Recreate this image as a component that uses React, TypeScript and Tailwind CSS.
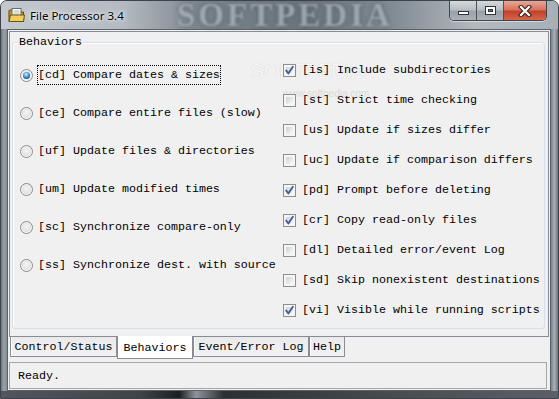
import React from "react";

const MONO = "font-['Liberation_Mono','Courier_New',monospace] text-[11.67px] leading-[14px] text-black";

function Radio({ checked }: { checked?: boolean }) {
  return (
    <span className="w-[13px] h-[13px] shrink-0 rounded-full border border-[#8b8b8b] bg-[radial-gradient(circle_at_50%_45%,#d9d9d9_0%,#e6e6e6_40%,#fbfbfb_75%,#d4d4d4_100%)] flex items-center justify-center">
      {checked ? (
        <span className="w-[7px] h-[7px] rounded-full bg-[radial-gradient(circle_at_45%_35%,#d6f2ff_0%,#5aaee4_35%,#1b5d9c_70%,#0d2f57_100%)]" />
      ) : (
        <span className="w-[9px] h-[9px] rounded-full bg-[radial-gradient(circle_at_50%_40%,#f4f4f4_0%,#dadada_100%)]" />
      )}
    </span>
  );
}

function Check({ checked }: { checked?: boolean }) {
  return (
    <span className="relative w-[13px] h-[13px] shrink-0 border border-[#8e8f8f] bg-[#f4f4f4] p-px">
      <span className="block w-full h-full border border-[#f6f6f6] bg-[linear-gradient(135deg,#d0d0d0_0%,#e6e6e6_50%,#f8f8f8_100%)]" />
      {checked && (
        <svg className="absolute left-0 top-0" width="11" height="11" viewBox="0 0 11 11">
          <path d="M2.2 5.6 L4.4 8.4 L8.9 1.8" fill="none" stroke="#4a5e9a" strokeWidth="1.9" strokeLinecap="round" strokeLinejoin="round" />
        </svg>
      )}
    </span>
  );
}

function FolderIcon() {
  return (
    <svg width="17" height="16" viewBox="0 0 17 16">
      <path d="M1 3.5 L1 14.5 L15.5 14.5 L15.5 5 L7.5 5 L6 3 L1.5 3 Z" fill="#c9962a" stroke="#5e4512" strokeWidth="1" />
      <rect x="4" y="1.5" width="9" height="9" fill="#fdfdfd" stroke="#6b6b6b" strokeWidth="1" />
      <path d="M5.5 4 H11.5 M5.5 6 H11.5 M5.5 8 H10" stroke="#9aa" strokeWidth="0.8" />
      <path d="M1 14.5 L2.5 8 L16.5 8 L15.5 14.5 Z" fill="#f2cf5b" stroke="#6b5215" strokeWidth="1" />
    </svg>
  );
}

function CaptionButtons() {
  return (
    <div className="flex h-[20px] border border-t-0 border-[#3e454b] rounded-b-[5px] overflow-hidden shadow-[0_1px_0_rgba(255,255,255,0.5)]">
      <div className="w-[27px] h-full flex items-center justify-center bg-[linear-gradient(180deg,#d4d9dd_0%,#b8bfc5_45%,#9aa2a9_55%,#aab1b7_100%)] border-r border-[#4b5157]">
        <span className="block w-[11px] h-[4px] mt-[5px] bg-white border border-[#2f3438]" />
      </div>
      <div className="w-[27px] h-full flex items-center justify-center bg-[linear-gradient(180deg,#d4d9dd_0%,#b8bfc5_45%,#9aa2a9_55%,#aab1b7_100%)] border-r border-[#4b5157]">
        <span className="block w-[11px] h-[9px] border border-[#2f3438] bg-white p-[2px]">
          <span className="block w-full h-full bg-[#6d757c] border border-[#2f3438]" />
        </span>
      </div>
      <div className="w-[42px] h-full flex items-center justify-center bg-[linear-gradient(180deg,#e8a797_0%,#d9735e_45%,#c2412a_55%,#d5684a_100%)]">
        <svg width="14" height="12" viewBox="0 0 14 12">
          <path d="M3 2 L11 10 M11 2 L3 10" stroke="#3a2420" strokeWidth="4.4" strokeLinecap="square" />
          <path d="M3 2 L11 10 M11 2 L3 10" stroke="#ffffff" strokeWidth="2.2" strokeLinecap="square" />
        </svg>
      </div>
    </div>
  );
}

export default function App() {
  const radios: [string, boolean][] = [
    ["[cd] Compare dates & sizes", true],
    ["[ce] Compare entire files (slow)", false],
    ["[uf] Update files & directories", false],
    ["[um] Update modified times", false],
    ["[sc] Synchronize compare-only", false],
    ["[ss] Synchronize dest. with source", false],
  ];
  const checks: [string, boolean][] = [
    ["[is] Include subdirectories", true],
    ["[st] Strict time checking", false],
    ["[us] Update if sizes differ", false],
    ["[uc] Update if comparison differs", false],
    ["[pd] Prompt before deleting", true],
    ["[cr] Copy read-only files", true],
    ["[dl] Detailed error/event Log", false],
    ["[sd] Skip nonexistent destinations", false],
    ["[vi] Visible while running scripts", true],
  ];

  return (
    <div className="w-[559px] h-[399px] flex flex-col overflow-hidden rounded-t-[7px] border border-[#3d4348] bg-[linear-gradient(180deg,#a9b1b8_0%,#8b949b_40%,#5b6268_100%)]">
      {/* Title bar */}
      <div className="relative h-[28px] shrink-0 flex items-start bg-[linear-gradient(90deg,#c3c9cf_0%,#b3bac1_22%,#7a848d_36%,#6a747d_55%,#808a92_70%,#b2b9bf_85%,#a8afb6_100%)]">
        <div className="absolute left-[176px] top-[-4px] font-['Liberation_Serif',serif] font-bold text-[33px] tracking-[3px] leading-[36px] text-[#a9b0b6] opacity-80 blur-[1px] [text-shadow:0_0_5px_#4a535a]">
          SOFTPEDIA
        </div>
        <div className="relative ml-[7px] mt-[6px]">
          <FolderIcon />
        </div>
        <div className="relative ml-[5px] mt-[7px] font-['Noto_Sans',sans-serif] text-[11.5px] leading-[16px] text-black [text-shadow:0_0_6px_#ffffff,0_0_3px_#ffffff]">
          File Processor 3.4
        </div>
        <div className="relative ml-auto mr-[11px]">
          <CaptionButtons />
        </div>
      </div>

      {/* Body */}
      <div className="flex flex-1 min-h-0">
        <div className="w-[6px] shrink-0 bg-[linear-gradient(90deg,#6f777e_0%,#9aa2a9_50%,#858d94_100%)]" />
        <div className="w-[544px] shrink-0 border border-[#5a6168] bg-[#f0f0f0] flex flex-col">
          {/* Tab panel */}
          <div className="ml-px mt-px w-[540px] h-[306px] shrink-0 border border-[#898c95] bg-[#f0f0f0] flex flex-col">
            <div className="relative ml-[2px] mt-[10px] w-[533px] h-[287px] border border-[#d5dfe5] rounded-[3px] shadow-[inset_1px_1px_0_#ffffff]">
              <span className={`absolute left-[5px] top-[-8px] px-px bg-[#f0f0f0] ${MONO}`}>Behaviors</span>
              {/* watermark */}
              <div className="absolute left-[237px] top-[17px] font-['Liberation_Sans',sans-serif] text-[21px] leading-[22px] tracking-[-0.5px] text-[#f5f5f5] [text-shadow:0_0_1px_#c8c8c8] pointer-events-none">
                SOFTPEDIA<sup className="text-[7px]">™</sup>
              </div>
              <div className="absolute left-[270px] top-[45px] font-['Liberation_Sans',sans-serif] text-[10px] leading-[12px] text-[#dadada] pointer-events-none">
                www.softpedia.com
              </div>
              <div className="flex pt-[12px] pl-[7px]">
                <div className="w-[263px] shrink-0 flex flex-col mt-[1px]">
                  {radios.map(([label, on], i) => (
                    <div key={i} className="h-[38px] flex items-center gap-[4px]">
                      <Radio checked={on} />
                      <span className={`relative px-0 py-[2px] border border-dotted ${on ? "border-black" : "border-transparent"} ${MONO} whitespace-pre`}>
                        {label}
                      </span>
                    </div>
                  ))}
                </div>
                <div className="flex flex-col">
                  {checks.map(([label, on], i) => (
                    <div key={i} className="h-[30px] flex items-center gap-[6px]">
                      <Check checked={on} />
                      <span className={`relative ${MONO} whitespace-pre`}>{label}</span>
                    </div>
                  ))}
                </div>
              </div>
            </div>
          </div>

          {/* Tabs */}
          <div className="-mt-px ml-[2px] h-[23px] shrink-0 flex items-start">
            {[
              ["Control/Status", 107, false],
              ["Behaviors", 76, true],
              ["Event/Error Log", 116, false],
              ["Help", 36, false],
            ].map(([label, w, sel], i) =>
              sel ? (
                <div
                  key={i}
                  style={{ width: w as number }}
                  className={`relative z-10 h-[23px] border-x border-b border-[#898c95] bg-white flex items-center justify-center pt-[1px] ${MONO}`}
                >
                  {label}
                </div>
              ) : (
                <div
                  key={i}
                  style={{ width: w as number }}
                  className={`h-[21px] border border-[#898c95] bg-[linear-gradient(180deg,#eaeaea_0%,#f2f2f2_100%)] flex items-center justify-center shadow-[inset_1px_0_0_#ffffff] ${MONO}`}
                >
                  {label}
                </div>
              )
            )}
          </div>

          {/* Status box */}
          <div className="ml-px mt-[3px] w-[538px] h-[27px] shrink-0 border border-[#a7a7a7] flex items-center pl-[8px]">
            <span className={MONO}>Ready.</span>
          </div>
        </div>
        <div className="flex-1 bg-[linear-gradient(90deg,#7b838a_0%,#a7aeb4_50%,#6c737a_100%)]" />
      </div>

      {/* Bottom frame */}
      <div className="h-[7px] shrink-0 bg-[linear-gradient(90deg,#50565c_0%,#3f4449_25%,#1c1f22_32%,#8e959b_35%,#2c3034_40%,#474c51_70%,#5a6066_100%)]" />
    </div>
  );
}
